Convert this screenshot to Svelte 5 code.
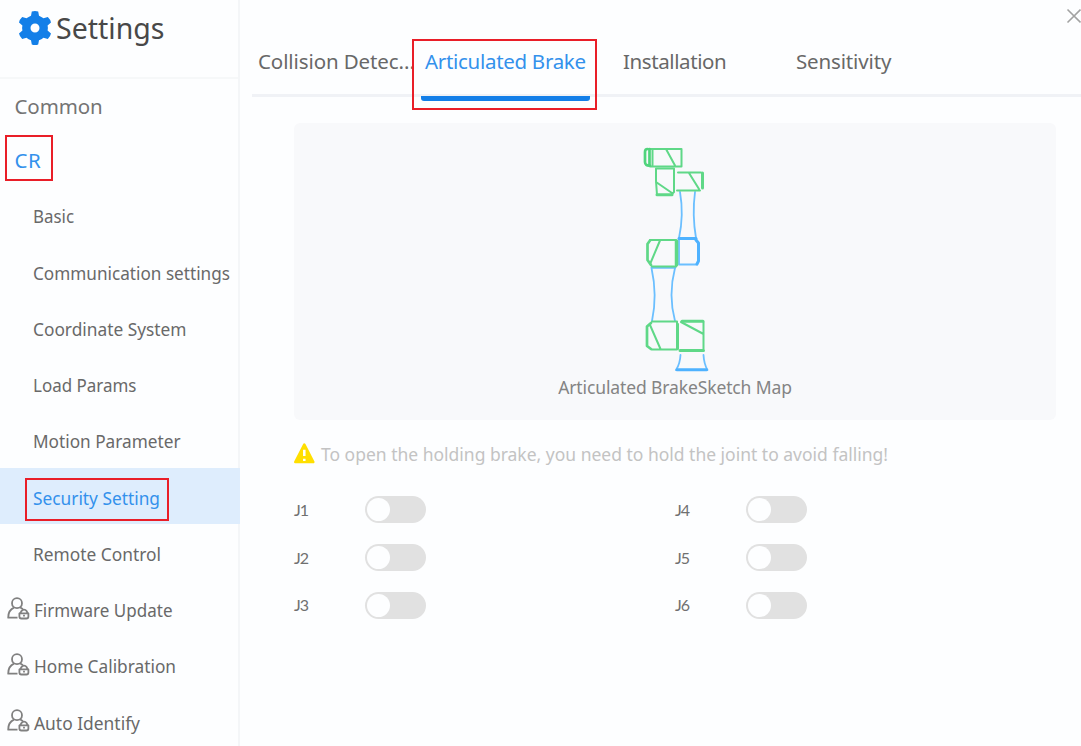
<script>
  const items = [
    { label: 'Basic', w: 41 },
    { label: 'Communication settings', w: 197 },
    { label: 'Coordinate System', w: 153.5 },
    { label: 'Load Params', w: 103.5 },
    { label: 'Motion Parameter', w: 147.5 },
    { label: 'Security Setting', w: 127, active: true },
    { label: 'Remote Control', w: 128 },
    { label: 'Firmware Update', w: 138.5, locked: true },
    { label: 'Home Calibration', w: 142, locked: true },
    { label: 'Auto Identify', w: 106, locked: true }
  ];
  const joints = ['J1', 'J4', 'J2', 'J5', 'J3', 'J6'];
</script>

<div class="window">
  <aside>
    <header>
      <svg class="gear" width="34" height="36" viewBox="0 0 34 36">
        <path fill="#137fe8" fill-rule="evenodd" d="M13.8 1.500Q17 .5 20.200 1.500L21 5.800Q23.500 6.800 25.500 8.300L29.800 7Q32.300 9.300 33 12.500L29.600 15.500Q30.200 18 29.600 20.500L33 23.500Q32.300 26.700 29.800 29L25.500 27.700Q23.500 29.300 21 30.200L20.200 34.500Q17 35.500 13.800 34.500L13 30.200Q10.500 29.300 8.500 27.700L4.200 29Q1.700 26.700 1 23.500L4.400 20.500Q3.800 18 4.400 15.500L1 12.500Q1.700 9.300 4.200 7L8.500 8.300Q10.500 6.800 13 5.800ZM17 13.500a4.500 4.500 0 1 0 0 9a4.500 4.500 0 1 0 0-9Z" />
      </svg>
      <h1>Settings</h1>
    </header>
    <nav>
      <div class="group common">Common</div>
      <div class="group cr">CR<span class="mark mark-cr"></span></div>
      {#each items as item}
        <div class="item" class:active={item.active} class:locked={item.locked}>
          {#if item.locked}
            <svg class="user" width="24" height="24" viewBox="0 0 24 24" fill="none" stroke="#808080" stroke-width="1.800" stroke-linejoin="round">
              <circle cx="11" cy="6.200" r="5" />
              <path d="M8 10.700C4.200 12.300 2.200 15.800 2.200 20.700H11.500" />
              <path d="M14 10.200L17 12.300" />
              <path d="M13.400 16.500Q15 15.500 15.200 14.300Q18.200 10.800 20.800 14.300Q21 15.500 22.400 16.500V19.500Q22.400 21.500 20.400 21.500H15.400Q13.400 21.500 13.400 19.500ZM14 16.300H22" />
              <path d="M18 17.800v1.800" />
            </svg>
          {/if}
          <svg class="label" width={item.w + 2} height="30"><text x="0" y="23.300" textLength={item.w} lengthAdjust="spacingAndGlyphs">{item.label}</text></svg>
          {#if item.active}<span class="mark mark-item"></span>{/if}
        </div>
      {/each}
    </nav>
  </aside>

  <main>
    <div class="topbar">
      <svg width="16" height="16" viewBox="0 0 16 16" stroke="#a2a2a2" stroke-width="1.600"><path d="M1.500 1.500L14.500 14.500M14.500 1.500L1.500 14.500" /></svg>
    </div>
    <div class="tabs">
      <div class="tab t1">Collision Detec<span class="dots">...</span></div>
      <div class="tab t2 current">Articulated Brake<span class="mark mark-tab"></span></div>
      <div class="tab t3">Installation</div>
      <div class="tab t4">Sensitivity</div>
    </div>
    <section>
      <svg class="robot" width="90" height="240" viewBox="630 140 90 240" fill="none" stroke-linejoin="round" stroke-linecap="round">
        <g stroke="#6bbfff" stroke-width="1.800">
          <path d="M680 192Q684 215 679 238M695 192Q692 215 696 238" />
          <path d="M679 239V264.500H697" /><path d="M679 238.500H696" stroke="#4eb2ff" stroke-width="3" />
          <path d="M696 240L698.500 243V261L697 264" stroke="#4eb2ff" stroke-width="3" />
          <path d="M651.500 268Q657.500 295 652 321M675 268Q668 295 675 321" /><path d="M652 267.500H675" stroke-width="2.500" />
          <path d="M680.500 355Q680 364 676 370M703.500 355Q704 364 707.500 370" />
          <path d="M677 369.800H706.500" stroke="#4eb2ff" stroke-width="3" />
        </g>
        <g stroke="#5fd887" stroke-width="2">
          <path d="M650 149H681.500V166.500H650M652.500 149V165M666 149L675 165.500" />
          <path d="M647.500 149Q645 149 645 152V162Q645 166 650 165.500M649.500 149V165" stroke="#50d47c" stroke-width="2.700" />
          <path d="M656 168.500H674V192L671 195H657L656 181ZM656 182L672 193" />
          <path d="M657 194.700H672" stroke-width="3" />
          <path d="M678 172.500H701M677 190.500H700M689 173L699 189" /><path d="M702.500 173V188" stroke-width="3" />
          <path d="M650 240H676V266.500H652M660 240.500L650.500 263" />
          <path d="M650 240.500L647.500 244V260L651 265" stroke-width="2.700" /><path d="M676.500 241V265" stroke-width="3.500" />
          <path d="M652 321.500H677V349.500H652M650 325L660.500 349" /><path d="M651 323L647 326.500V346L651 349" stroke-width="2.700" />
          <path d="M678 324V349M681 322L703.500 334M703.500 322V349" /><path d="M682 321.300H703M680 350.500H703.500" stroke-width="3" />
        </g>
      </svg>
      <div class="caption">Articulated BrakeSketch Map</div>
    </section>
    <div class="notice">
      <svg width="22" height="22" viewBox="0 0 22 22"><path d="M11.300 1.700L20.300 19H2.300Z" fill="#ffdf00" stroke="#ffdf00" stroke-width="2.600" stroke-linejoin="round" /><path d="M11.300 6.800V13M11.300 15.800V18" stroke="#fff" stroke-width="2.500" /></svg>
      <svg class="warn" width="570" height="30"><text x="0" y="21.500" textLength="567" lengthAdjust="spacingAndGlyphs">To open the holding brake, you need to hold the joint to avoid falling!</text></svg>
    </div>
    <div class="joints">
      {#each joints as j}
        <div class="joint"><span class="name">{j}</span><span class="switch"><i></i></span></div>
      {/each}
    </div>
  </main>
</div>

<style>
  :global(body) { margin: 0; overflow: hidden; background: #fdfeff; }
  .window { display: flex; width: 1081px; height: 746px; overflow: hidden; background: #fdfeff; color: #686868; font-family: "Noto Sans", "Open Sans", sans-serif; }
  aside { box-sizing: border-box; width: 240px; flex: none; border-right: 2px solid #f4f6f8; }
  header { box-sizing: border-box; height: 79px; display: flex; align-items: flex-start; padding: 10px 0 0 18px; border-bottom: 2px solid #f6f8f9; }
  .gear { flex: none; }
  h1 { margin: -1px 0 0 4px; font-size: 28.500px; line-height: 38px; font-weight: 400; color: #484848; }
  .group { position: relative; box-sizing: border-box; padding-left: 14.500px; font-size: 20.500px; letter-spacing: -.1px; }
  .common { height: 56px; line-height: 55px; color: #747474; }
  .cr { height: 51.500px; line-height: 50px; color: #3391ec; letter-spacing: .5px; }
  .item { position: relative; display: flex; align-items: center; width: 240px; height: 56.250px; padding-left: 33px; box-sizing: border-box; }
  .item.locked { padding-left: 6px; }
  .label { overflow: visible; margin-top: 1.500px; font-size: 17.500px; fill: #696969; }
  .locked .label { margin-left: 4px; }
  .active { background: #deedfd; }
  .active .label { fill: #3391ec; }
  .user { flex: none; margin-top: 1px; }
  .mark { position: absolute; box-sizing: border-box; border: 2px solid #e91e28; }
  .mark-cr { left: 5px; top: 0; width: 48px; height: 46px; }
  .mark-item { left: 25px; top: 10px; width: 144px; height: 43px; }
  main { flex: 1; min-width: 0; padding-left: 12px; }
  .topbar { height: 30px; box-sizing: border-box; padding: 8px 0 0 814px; }
  .topbar svg { display: block; }
  .tabs { height: 67px; box-sizing: border-box; display: flex; border-bottom: 3px solid #f0f2f6; font-size: 20.500px; letter-spacing: -.3px; line-height: 63px; white-space: nowrap; }
  .tab { position: relative; box-sizing: border-box; flex: none; }
  .t1 { width: 169px; padding-left: 6px; letter-spacing: -.1px; }
  .dots { letter-spacing: 0; }
  .t2 { width: 169px; height: 71px; padding-left: 4px; color: #3391ec; border-bottom: 5px solid #137fe8; border-radius: 0 0 3px 3px; }
  .t3 { width: 173px; padding-left: 33px; letter-spacing: -.4px; }
  .t4 { padding-left: 33px; letter-spacing: -.15px; }
  .mark-tab { left: -9px; top: 9px; width: 185px; height: 71px; }
  section { width: 762px; height: 297px; margin: 26px 0 0 42px; box-sizing: border-box; padding-top: 17px; border-radius: 6px; background: #f8f9fb; text-align: center; }
  .robot { display: block; margin-left: 336px; }
  .caption { margin-top: -6px; font-size: 17.500px; letter-spacing: -.12px; line-height: 26px; color: #848484; }
  .notice { display: flex; align-items: center; gap: 6px; height: 30px; margin: 19px 0 0 41px; }
  .warn { overflow: visible; font-size: 18px; fill: #c3c3c3; }
  .joints { display: grid; grid-template-columns: 381px 381px; grid-auto-rows: 47.800px; margin: 17px 0 0 42px; }
  .joint { display: flex; align-items: center; }
  .name { width: 71px; padding-bottom: 1px; font-family: Lato, sans-serif; font-size: 16px; letter-spacing: -1px; color: #707070; }
  .switch { box-sizing: border-box; width: 61px; height: 27px; border-radius: 14px; padding: 2px; background: #e1e1e1; }
  .switch i { display: block; width: 23px; height: 23px; border-radius: 50%; background: #fdfeff; }
</style>
